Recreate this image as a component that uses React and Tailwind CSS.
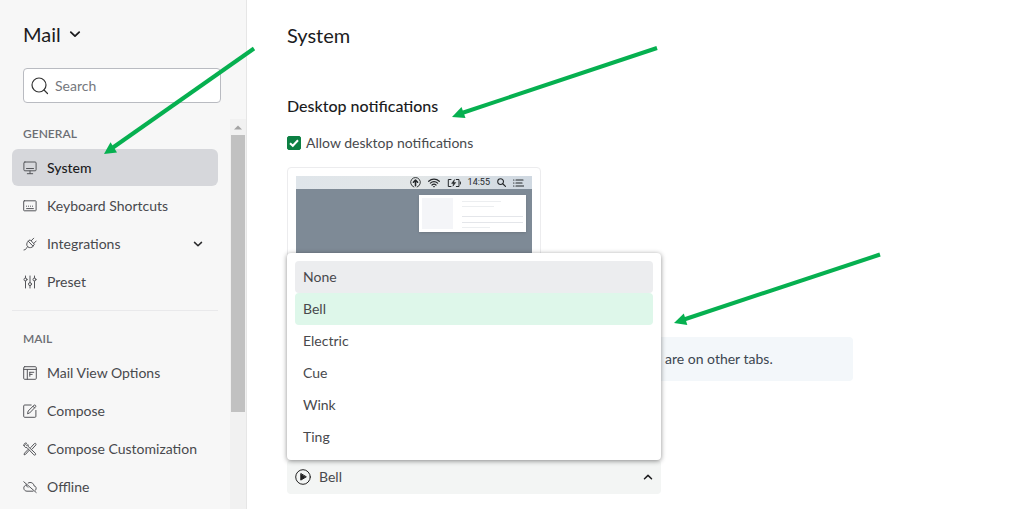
import { useState } from "react";

function Icon({ children, className = "size-3.5", viewBox = "0 0 14 14" }) {
  return (
    <svg
      viewBox={viewBox}
      className={`shrink-0 ${className}`}
      fill="none"
      stroke="currentColor"
      strokeWidth="1"
      strokeLinecap="round"
      strokeLinejoin="round"
      aria-hidden="true"
    >
      {children}
    </svg>
  );
}

const icons = {
  system: (
    <Icon>
      <rect x="0.9" y="1" width="12.2" height="8.8" rx="1" />
      <path d="M3.5 7.5h7M7 10v2.6M4.3 12.7h5.4" />
    </Icon>
  ),
  keyboard: (
    <Icon>
      <rect x="0.7" y="1.8" width="12.4" height="10" rx="0.6" />
      <path d="M3.4 7.2h0.2M5.4 7.2h0.2M7.4 7.2h0.2M9.4 7.2h0.2M3.6 9.6h6.8" />
    </Icon>
  ),
  plug: (
    <Icon>
      <path d="M5.2 4.2l5 5.1c-1.4 1.4-3.7 1.9-5.4.6-1.700-1.700-1.300-4.200.4-5.700z" />
      <path d="M5.600 4l1.500-1.200 4.300 4.400-1.200 1.700M8.300 3.700l2.400-2.500M10.800 6.400l2.400-2.400M4.300 10c-1.200 1-.8 2.800-3.300 3" />
    </Icon>
  ),
  preset: (
    <Icon>
      <path d="M2.500 1v2M2.500 6v7M7 1v6.500M7 10.700v2.300M11.500 1v2M11.500 6v7" />
      <circle cx="2.500" cy="4.500" r="1.500" />
      <circle cx="7" cy="9.100" r="1.500" />
      <circle cx="11.500" cy="4.500" r="1.500" />
    </Icon>
  ),
  view: (
    <Icon>
      <rect x="0.700" y="0.700" width="12.600" height="12.600" rx="1" />
      <path d="M0.700 3.400h12.600M4.300 3.400v9.900M6.800 6.300h4M6.800 8.400h2.400M6.800 6.300v4" />
    </Icon>
  ),
  compose: (
    <Icon>
      <path d="M8.200 1H1.700a1 1 0 0 0-1 1v10.300a1 1 0 0 0 1 1h10.200a1 1 0 0 0 1-1V6.400" />
      <path d="M4.600 9.400l.6-2.400 5.900-5.900c.9-.6 2.200.6 1.600 1.600L6.900 8.700zM10 2.300l1.600 1.600" />
    </Icon>
  ),
  customize: (
    <Icon>
      <path d="M1 3.600C.4 2 2 .6 3.500 1.100L2.700 2.600l.9.9 1.500-.8c.3.700.1 1.200 0 1.700l7.300 6.900c1 1.200-.5 2.500-1.600 1.500L4 5.600C2.600 5.900 1.500 5.100 1 3.600z" />
      <path d="M6.100 8.400l-3.500 3.900-1.500.6.400-1.700 3.600-3.800M7.800 5.500l3.600-3.900c.9-.9 2.200.3 1.400 1.400L9.200 7" />
    </Icon>
  ),
  offline: (
    <Icon>
      <path d="M0.800 1.800l12.400 10.700M3.300 5C1.600 5.400.7 6.700.8 8.200c.1 1.800 1.500 3 3.200 3h6M5.200 3c2.600-1.500 5.500.1 5.800 2.800 2 .2 2.800 2.700 1.700 4.300" />
      <path d="M3.300 5c.3 1.200.8 1.900 1.700 2.300" />
    </Icon>
  ),
};

function Chevron({ up = false, className }) {
  return (
    <svg
      viewBox="0 0 10 10"
      className={`shrink-0 ${className}`}
      fill="none"
      stroke="currentColor"
      strokeWidth="1.500"
      strokeLinecap="round"
      strokeLinejoin="round"
      aria-hidden="true"
    >
      <path d={up ? "M1.500 6.800L5 3.400l3.500 3.400" : "M1.500 3.400L5 6.800l3.500-3.400"} />
    </svg>
  );
}

const groups = [
  {
    title: "GENERAL",
    items: [
      { label: "System", icon: "system", active: true },
      { label: "Keyboard Shortcuts", icon: "keyboard" },
      { label: "Integrations", icon: "plug", expandable: true },
      { label: "Preset", icon: "preset" },
    ],
  },
  {
    title: "MAIL",
    items: [
      { label: "Mail View Options", icon: "view" },
      { label: "Compose", icon: "compose" },
      { label: "Compose Customization", icon: "customize" },
      { label: "Offline", icon: "offline" },
    ],
  },
];

function NavGroup({ title, items }) {
  return (
    <section className="border-b border-[#e9e9eb] pb-2.5 last:border-0">
      <h2 className="px-[11px] text-xs font-semibold leading-4 text-[#6c6e74]">{title}</h2>
      <ul className="mt-[7px] flex flex-col gap-px">
        {items.map((item) => (
          <li key={item.label}>
            <a
              href="#"
              aria-current={item.active ? "page" : undefined}
              className={`flex h-[37px] items-center gap-2.5 rounded-md px-[11px] ${
                item.active ? "bg-[#d6d7db] font-medium text-[#1c1c1e]" : "text-[#48494d]"
              }`}
            >
              <span className="text-[#55565a]">{icons[item.icon]}</span>
              <span className="flex-1">{item.label}</span>
              {item.expandable && <Chevron className="mr-1 size-2.5 text-[#2a2a2c]" />}
            </a>
          </li>
        ))}
      </ul>
    </section>
  );
}

function Scrollbar() {
  return (
    <div className="flex w-4 shrink-0 flex-col items-center bg-[#f1f1f1]" aria-hidden="true">
      <svg viewBox="0 0 16 16" className="size-4 shrink-0">
        <path d="M4 10.500L8 6.500l4 4z" fill="#a3a3a3" />
      </svg>
      <div className="h-3/4 max-h-[277px] w-3.5 bg-[#c1c1c1]" />
    </div>
  );
}

function Sidebar() {
  return (
    <aside className="flex w-[247px] shrink-0 flex-col border-r border-[#e6e6e6] bg-[#f7f7f7]">
      <div className="px-[23px] pt-5">
        <button type="button" className="flex items-center gap-2 text-xl leading-7 text-[#1c1c1e]">
          Mail
          <Chevron className="size-3" />
        </button>
      </div>
      <div className="pl-[23px] pr-[25px] pt-5">
        <label className="flex h-[35px] items-center gap-1.5 rounded border border-[#b9bbc1] bg-white px-[7px]">
          <Icon className="size-[18px] text-[#333]" viewBox="0 0 18 18">
            <circle cx="8" cy="8" r="7" strokeWidth="1.200" />
            <path d="M13 13l3.500 3.500" strokeWidth="1.200" />
          </Icon>
          <input
            type="text"
            aria-label="Search"
            placeholder="Search"
            className="w-full min-w-0 bg-transparent outline-none placeholder:text-[#75777d]"
          />
        </label>
      </div>
      <div className="mt-4 flex min-h-0 flex-1">
        <nav className="flex min-w-0 flex-1 flex-col gap-5 overflow-hidden px-3 pt-[7px]">
          {groups.map((group) => (
            <NavGroup key={group.title} {...group} />
          ))}
        </nav>
        <Scrollbar />
      </div>
    </aside>
  );
}

function Preview() {
  return (
    <div className="h-[140px] w-[254px] rounded border border-[#ececee] bg-white p-2">
      <div className="flex h-full flex-col bg-[#7e8a96]">
        <div className="flex h-[13px] shrink-0 items-center justify-end gap-[7px] bg-linear-to-r from-[#dfe5ea] via-[#e3e7e8] to-[#cfd8e1] pr-2 text-[#25282b]">
          <Icon className="size-[11px]" viewBox="0 0 12 12">
            <path d="M4.200 10.900a5.300 5.300 0 1 1 3.600 0" />
            <path d="M6 9.500V3.500M3.700 5.700L6 3.300l2.300 2.400" strokeWidth="1.700" />
          </Icon>
          <Icon className="h-2.5 w-3" viewBox="0 0 12 10">
            <path d="M.7 3.300c3-2.900 7.600-2.900 10.600 0M2.400 5.200c2-2 5.200-2 7.200 0M4 7c1.200-1.100 2.800-1.100 4 0M5.700 8.600h.6" strokeWidth="1.200" />
          </Icon>
          <Icon className="h-2.5 w-3.5" viewBox="0 0 14 10">
            <path d="M4 1.500H1.300v7H4M9.300 1.500H12v7H9.300M13.400 4v2" />
            <path d="M7.400 1.800L4.600 5.400h1.900L5.900 8.200l2.900-3.700H6.900z" fill="currentColor" strokeWidth="0.500" />
          </Icon>
          <span className="font-[Roboto] text-[9px] leading-none">14:55</span>
          <Icon className="size-[9px]" viewBox="0 0 10 10">
            <circle cx="4" cy="4" r="3.200" strokeWidth="1.200" />
            <path d="M6.400 6.400l3 3" strokeWidth="1.300" />
          </Icon>
          <Icon className="h-2 w-[11px]" viewBox="0 0 11 8">
            <path d="M.6 1h.3M.6 4h.3M.6 7h.3M3 1h7M3 4h6M3 7h7.500" strokeWidth="1.200" />
          </Icon>
        </div>
        <div className="mr-1.5 mt-1.5 flex h-[37px] w-[107px] justify-between self-end bg-white p-[3px] shadow">
          <div className="w-[31px] bg-[#f4f5f8]" />
          <div className="flex w-[61px] flex-col pt-[3px]">
            <div className="h-px w-[39px] bg-[#eceef0]" />
            <div className="mt-1 h-px w-8 bg-[#eceef0]" />
            <div className="mt-[9px] h-px w-full bg-[#e4e6ea]" />
            <div className="mt-[5px] h-px w-full bg-[#e4e6ea]" />
            <div className="mt-1 h-px w-7 bg-[#eceef0]" />
          </div>
        </div>
      </div>
    </div>
  );
}

const sounds = ["None", "Bell", "Electric", "Cue", "Wink", "Ting"];

function SoundPicker() {
  const [sound, setSound] = useState("Bell");
  return (
    <div className="relative w-[374px]">
      <ul
        role="listbox"
        aria-label="Sounds"
        className="absolute bottom-full left-0 w-full rounded bg-white px-2 pb-[7px] pt-2 shadow-[0_1px_5px_rgba(0,0,0,0.45)]"
      >
        {sounds.map((name) => (
          <li key={name} role="option" aria-selected={name === sound}>
            <button
              type="button"
              onClick={() => setSound(name)}
              className={`block h-8 w-full rounded px-2 text-left ${
                name === sound ? "bg-[#def7ea]" : name === "None" ? "bg-[#ecedef]" : ""
              }`}
            >
              {name}
            </button>
          </li>
        ))}
      </ul>
      <div className="flex h-[34px] items-center gap-2 rounded bg-[#f3f5f4] px-2">
        <button type="button" aria-label="Play sound" className="text-[#222]">
          <Icon className="size-4" viewBox="0 0 16 16">
            <circle cx="8" cy="8" r="7.300" />
            <path d="M5.800 4.900v6.200L11 8z" fill="currentColor" />
          </Icon>
        </button>
        <select
          aria-label="Notification sound"
          value={sound}
          onChange={(e) => setSound(e.target.value)}
          className="h-full flex-1 appearance-none bg-transparent outline-none"
        >
          {sounds.map((name) => (
            <option key={name}>{name}</option>
          ))}
        </select>
        <Chevron up className="size-2.5 text-[#1c1c1e]" />
      </div>
    </div>
  );
}

function Settings() {
  return (
    <main className="min-w-0 flex-1 overflow-hidden bg-white pl-10 pr-10 pt-[21px]">
      <h1 className="text-xl leading-7 text-[#1c1c1e]">System</h1>
      <h2 className="mt-[45px] text-base font-medium leading-6 text-[#1c1c1e]">Desktop notifications</h2>
      <label className="mt-[13px] flex items-center gap-[5px] leading-6">
        <span className="relative flex size-3.5">
          <input
            type="checkbox"
            defaultChecked
            className="peer size-3.5 appearance-none rounded-xs border border-[#0c8043] checked:bg-[#0c8043]"
          />
          <svg
            viewBox="0 0 14 14"
            className="pointer-events-none absolute inset-0 hidden size-3.5 peer-checked:block"
            fill="none"
            stroke="white"
            strokeWidth="2"
            aria-hidden="true"
          >
            <path d="M3 7.200l2.800 2.600L11 4.300" />
          </svg>
        </span>
        Allow desktop notifications
      </label>
      <div className="mt-3">
        <Preview />
      </div>
      <div className="mt-[30px] flex h-11 max-w-[566px] items-center rounded bg-[#f3f7fa] pl-[378px] text-[#3c4650]">
        are on other tabs.
      </div>
      <div className="mt-[79px]">
        <SoundPicker />
      </div>
    </main>
  );
}

function Arrows() {
  return (
    <svg className="pointer-events-none absolute inset-0 size-full" fill="#06b050" stroke="#06b050" aria-hidden="true">
      <path d="M254 48.500L113 147.500" strokeWidth="4" />
      <path d="M104 154l6.500-11.800 6.500 10.400z" stroke="none" />
      <path d="M657 48L462 113" strokeWidth="4" />
      <path d="M452 117l9.500-10 4 11z" stroke="none" />
      <path d="M880 254.500L684 319.500" strokeWidth="4" />
      <path d="M674 323l9.800-9.500 3.500 11.500z" stroke="none" />
    </svg>
  );
}

export default function App() {
  return (
    <div className="relative flex h-screen overflow-hidden font-[Lato,'Liberation_Sans',sans-serif] text-sm text-[#48494d]">
      <Sidebar />
      <Settings />
      <Arrows />
    </div>
  );
}
